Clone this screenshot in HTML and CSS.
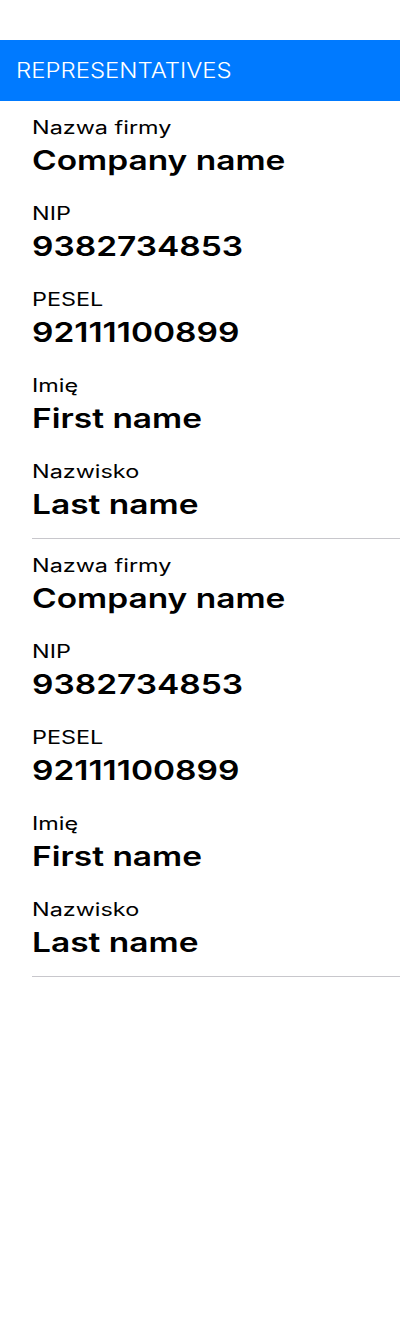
FILE: index.html
```html
<!DOCTYPE html>
<html>
<head>
<meta charset="utf-8">
<link rel="stylesheet" href="styles.css">
</head>
<body>
<div class="page">
  <header class="bar"><span class="bar-title">REPRESENTATIVES</span></header>
  <section class="block">
    <div class="field"><span class="label">Nazwa firmy</span><span class="value">Company name</span></div>
    <div class="field"><span class="label">NIP</span><span class="value">9382734853</span></div>
    <div class="field"><span class="label">PESEL</span><span class="value">92111100899</span></div>
    <div class="field"><span class="label">Imię</span><span class="value">First name</span></div>
    <div class="field"><span class="label">Nazwisko</span><span class="value">Last name</span></div>
  </section>
  <section class="block">
    <div class="field"><span class="label">Nazwa firmy</span><span class="value">Company name</span></div>
    <div class="field"><span class="label">NIP</span><span class="value">9382734853</span></div>
    <div class="field"><span class="label">PESEL</span><span class="value">92111100899</span></div>
    <div class="field"><span class="label">Imię</span><span class="value">First name</span></div>
    <div class="field"><span class="label">Nazwisko</span><span class="value">Last name</span></div>
  </section>
</div>
</body>
</html>
```
FILE: styles.css
```css
html, body {
  margin: 0;
  padding: 0;
  background: #fff;
}
body {
  font-family: Inter, "Noto Sans", "Liberation Sans", sans-serif;
  color: #000;
  width: 400px;
  height: 1334px;
  overflow: hidden;
}
.page {
  padding-top: 40px;
}
.bar {
  height: 61px;
  background: #007aff;
  display: flex;
  align-items: center;
  padding-left: 16px;
}
.bar-title {
  display: inline-block;
  color: #fff;
  font-size: 21px;
  font-weight: 300;
  line-height: 26px;
  transform: scaleX(1.14);
  transform-origin: left center;
}
.block {
  margin-left: 32px;
  padding-top: 16px;
  padding-bottom: 17px;
  border-bottom: 1px solid #c8c7cc;
  display: flex;
  flex-direction: column;
  gap: 26px;
}
.field {
  display: flex;
  flex-direction: column;
  align-items: flex-start;
  gap: 6px;
}
.label {
  display: inline-block;
  font-size: 18px;
  line-height: 22px;
  font-weight: 400;
  transform: scaleX(1.3);
  transform-origin: left center;
}
.value {
  display: inline-block;
  font-size: 27px;
  line-height: 32px;
  font-weight: 600;
  transform: scaleX(1.24);
  transform-origin: left center;
}
```
